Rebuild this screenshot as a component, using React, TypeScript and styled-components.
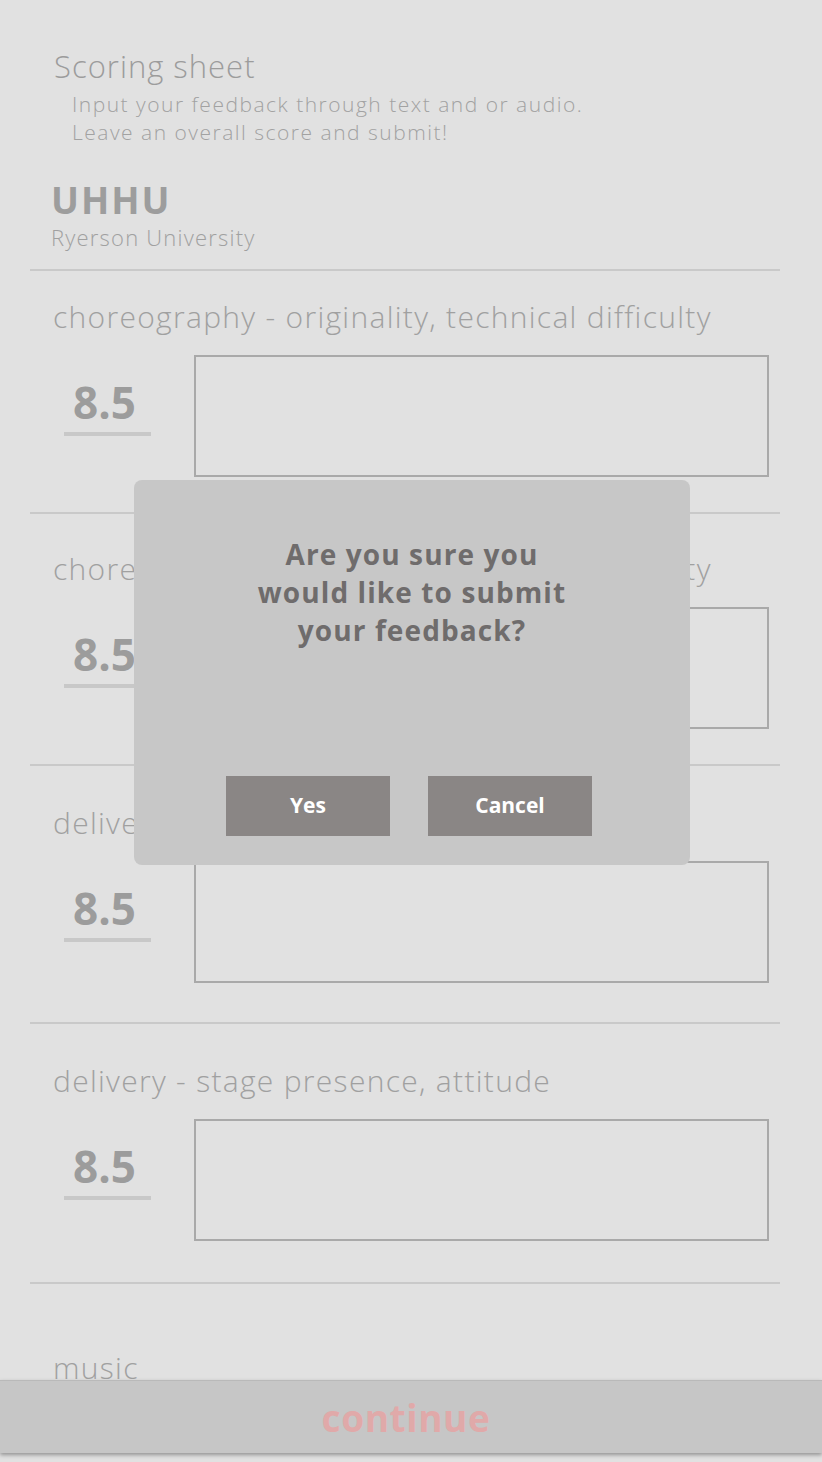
import styled, { createGlobalStyle } from 'styled-components'

const GlobalStyle = createGlobalStyle`
  html, body {
    margin: 0;
    padding: 0;
    background: #e1e1e1;
    font-family: 'Open Sans', 'Liberation Sans', sans-serif;
  }
  #root {
    min-height: 1462px;
  }
`

const Page = styled.div`
  position: relative;
  width: 822px;
  height: 1462px;
  overflow: hidden;
  background: #e1e1e1;
`

const Intro = styled.div`
  padding: 46px 0 0 54px;
`

const Title = styled.h1`
  margin: 0;
  font-size: 31px;
  font-weight: 300;
  line-height: 40px;
  letter-spacing: 1px;
  color: #9c9c9c;
`

const Subtitle = styled.p`
  margin: 4px 0 0 18px;
  font-size: 21px;
  font-weight: 300;
  line-height: 28px;
  letter-spacing: 1.5px;
  color: #a2a2a2;
`

const Team = styled.div`
  padding: 34px 0 17px 51px;
`

const TeamName = styled.div`
  font-size: 37px;
  font-weight: 700;
  line-height: 40px;
  letter-spacing: 2px;
  color: #9d9d9d;
`

const School = styled.div`
  margin-top: 2px;
  font-size: 22px;
  font-weight: 300;
  line-height: 30px;
  letter-spacing: 1.2px;
  color: #a0a0a0;
`

const Section = styled.section<{ $top: number; $bottom: number }>`
  margin: 0 42px 0 30px;
  padding: ${(p) => p.$top}px 0 ${(p) => p.$bottom}px 0;
  border-top: 2px solid #c9c9c9;
`

const Label = styled.div`
  margin-left: 23px;
  font-size: 30px;
  font-weight: 300;
  line-height: 36px;
  letter-spacing: 1.3px;
  color: #a0a0a0;
`

const Row = styled.div`
  display: flex;
  align-items: flex-start;
  margin-top: 20px;
`

const Score = styled.div`
  width: 87px;
  margin: 19px 0 0 34px;
  padding: 0 0 2px 9px;
  box-sizing: border-box;
  border-bottom: 4px solid #c8c8c8;
  font-size: 44px;
  font-weight: 700;
  line-height: 56px;
  color: #9c9c9c;
`

const Feedback = styled.div`
  flex: 1;
  height: 118px;
  margin: 0 11px 0 43px;
  border: 2px solid #a9a9a9;
`

const Overlay = styled.div`
  position: absolute;
  left: 134px;
  top: 480px;
  width: 556px;
  height: 385px;
  box-sizing: border-box;
  padding: 55px 0 0 0;
  display: flex;
  flex-direction: column;
  align-items: center;
  background: #c7c7c7;
  border-radius: 8px;
`

const Question = styled.div`
  text-align: center;
  font-size: 28px;
  font-weight: 700;
  line-height: 38px;
  letter-spacing: 1.1px;
  color: #6f6c6c;
`

const Buttons = styled.div`
  display: flex;
  gap: 38px;
  margin: 127px 0 0 -6px;
`

const DialogButton = styled.button`
  width: 164px;
  height: 60px;
  padding: 0 0 3px 0;
  border: none;
  background: #8a8685;
  color: #ffffff;
  font-family: inherit;
  font-size: 21px;
  font-weight: 700;
`

const BottomBar = styled.div`
  position: absolute;
  left: 0;
  right: 0;
  top: 1380px;
  height: 73px;
  display: flex;
  align-items: center;
  justify-content: center;
  padding-right: 10px;
  box-sizing: border-box;
  background: #c6c6c6;
  box-shadow: 0 2px 4px rgba(0, 0, 0, 0.35);
  border-top: 1px solid #b9b9b9;
  font-size: 37px;
  font-weight: 700;
  letter-spacing: 0.6px;
  color: #e0a9a9;
`

const criteria = [
  { label: 'choreography - originality, technical difficulty', top: 28, bottom: 35 },
  { label: 'choreography - originality, technical difficulty', top: 37, bottom: 35 },
  { label: 'delivery - stage presence, attitude', top: 39, bottom: 39 },
  { label: 'delivery - stage presence, attitude', top: 39, bottom: 41 },
]

export default function App() {
  return (
    <Page>
      <GlobalStyle />
      <Intro>
        <Title>Scoring sheet</Title>
        <Subtitle>
          Input your feedback through text and or audio.
          <br />
          Leave an overall score and submit!
        </Subtitle>
      </Intro>
      <Team>
        <TeamName>UHHU</TeamName>
        <School>Ryerson University</School>
      </Team>
      {criteria.map((c, i) => (
        <Section key={i} $top={c.top} $bottom={c.bottom}>
          <Label>{c.label}</Label>
          <Row>
            <Score>8.5</Score>
            <Feedback />
          </Row>
        </Section>
      ))}
      <Section $top={66} $bottom={0}>
        <Label>music</Label>
      </Section>
      <Overlay>
        <Question>
          Are you sure you
          <br />
          would like to submit
          <br />
          your feedback?
        </Question>
        <Buttons>
          <DialogButton>Yes</DialogButton>
          <DialogButton>Cancel</DialogButton>
        </Buttons>
      </Overlay>
      <BottomBar>continue</BottomBar>
    </Page>
  )
}
